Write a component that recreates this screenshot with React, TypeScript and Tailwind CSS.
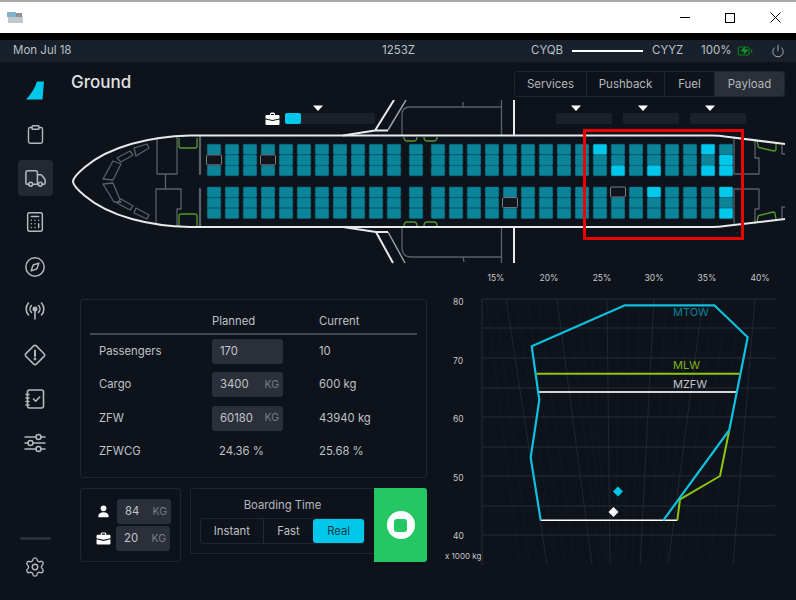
import React from 'react';
import { Battery, Calculator, Clipboard, Compass, Power, Settings, Truck, Zap } from 'lucide-react';

const SEAT_X = [207, 225, 243, 261, 279, 297, 315, 333, 351, 369, 387, 409, 431, 449, 467, 485, 503, 521, 539, 557, 575, 593, 611, 629, 647, 665, 683, 701, 719];
const SEAT_Y = [144, 154.7, 165.3, 186.8, 197.4, 208];

// keyed "x-rowIndex"
const BRIGHT = new Set(['593-0', '611-2', '647-2', '701-0', '701-2', '719-1', '719-2', '647-3', '719-3', '719-5']);
const EMPTY = new Set(['207-1', '261-1', '503-4', '611-3']);

const BriefcaseIcon = ({ className }: { className?: string }) => (
  <svg viewBox="0 0 16 14" className={className} fill="currentColor">
    <path d="M5 3V2a1.5 1.5 0 0 1 1.5-1.5h3A1.5 1.5 0 0 1 11 2v1h3.2A1.3 1.3 0 0 1 15.5 4.3V6.6L8 8.4.5 6.6V4.3A1.3 1.3 0 0 1 1.8 3ZM6.2 3h3.6V2a.3.3 0 0 0-.3-.3h-3a.3.3 0 0 0-.3.3Z" />
    <path d="M.5 7.8 8 9.6l7.5-1.8v4.4a1.3 1.3 0 0 1-1.3 1.3H1.8a1.3 1.3 0 0 1-1.3-1.3Z" />
  </svg>
);

const PersonIcon = ({ className }: { className?: string }) => (
  <svg viewBox="0 0 14 14" className={className} fill="currentColor">
    <circle cx="7" cy="3.6" r="3.1" />
    <path d="M1.5 13.2v-1.6C1.5 9.3 4 7.9 7 7.9s5.500 1.400 5.500 3.700v1.600Z" />
  </svg>
);

const SideButton = ({ children, active }: { children: React.ReactNode; active?: boolean }) => (
  <div className={`w-[35px] h-[36px] rounded-[4px] flex items-center justify-center text-[#b4b8be] ${active ? 'bg-[#232932]' : ''}`}>
    {children}
  </div>
);

const Sidebar = () => (
  <div className="w-[70px] shrink-0 flex flex-col items-center pl-0 pt-[19px] pb-[22px]">
    <svg viewBox="0 0 18 19" className="w-[18px] h-[19px] mb-[16px]">
      <path d="M11 0.500 18 0.500 16.500 18.500 0 18.500Q8 10 11 0.500Z" fill="#00c8ea" />
    </svg>
    <div className="flex flex-col items-center gap-[8.2px]">
      <SideButton><Clipboard size={21} strokeWidth={1.6} /></SideButton>
      <SideButton active><Truck size={23} strokeWidth={1.6} /></SideButton>
      <SideButton><Calculator size={22} strokeWidth={1.6} /></SideButton>
      <SideButton><Compass size={22} strokeWidth={1.6} /></SideButton>
      <SideButton>
        <svg viewBox="0 0 22 22" className="w-[22px] h-[22px]" fill="none" stroke="currentColor" strokeWidth="1.6" strokeLinecap="round">
          <circle cx="11" cy="9" r="1.700" fill="currentColor" />
          <path d="M11 10v9" />
          <path d="M7.500 12.500a5 5 0 0 1 0-7M14.500 5.500a5 5 0 0 1 0 7M4.500 15a9 9 0 0 1 0-12M17.500 3a9 9 0 0 1 0 12" />
        </svg>
      </SideButton>
      <SideButton>
        <svg viewBox="0 0 22 22" className="w-[22px] h-[22px]" fill="none" stroke="currentColor" strokeWidth="1.600" strokeLinecap="round" strokeLinejoin="round">
          <path d="M9.700 1.900a1.800 1.800 0 0 1 2.600 0l7.800 7.800a1.800 1.800 0 0 1 0 2.600l-7.800 7.800a1.800 1.800 0 0 1-2.600 0l-7.800-7.800a1.800 1.800 0 0 1 0-2.600Z" />
          <path d="M11 6.500v5.500" strokeWidth="2" />
          <circle cx="11" cy="15" r="0.600" fill="currentColor" />
        </svg>
      </SideButton>
      <SideButton>
        <svg viewBox="0 0 22 22" className="w-[22px] h-[22px]" fill="none" stroke="currentColor" strokeWidth="1.600" strokeLinecap="round" strokeLinejoin="round">
          <rect x="3.500" y="2" width="16" height="18" rx="2" />
          <path d="M2 6.500h3M2 10h3M2 13.500h3M2 17h3" />
          <path d="m9.500 11 2.200 2.200 4-4.200" />
        </svg>
      </SideButton>
      <SideButton>
        <svg viewBox="0 0 22 22" className="w-[22px] h-[22px]" fill="none" stroke="currentColor" strokeWidth="1.500" strokeLinecap="round">
          <path d="M1 5h11M17 5h4M1 11h3M9 11h12M1 17h11M17 17h4" />
          <circle cx="14.500" cy="5" r="2.500" />
          <circle cx="6.500" cy="11" r="2.500" />
          <circle cx="14.500" cy="17" r="2.500" />
        </svg>
      </SideButton>
    </div>
    <div className="mt-auto w-[31px] h-[3px] rounded-full bg-[#2a303a] mb-[16px]" />
    <div className="text-[#b4b8be]"><Settings size={22} strokeWidth={1.5} /></div>
  </div>
);

const Marker = ({ x }: { x: number }) => <path d={`M${x - 5} 105.500h10l-5 5.500Z`} fill="#fff" />;

const Aircraft = () => {
  const grey = '#5b6068';
  const green = '#4f9a2e';
  return (
    <svg viewBox="70 100 726 165" className="w-[726px] h-[165px] block" fill="none">
      {/* loading bars */}
      <rect x="285" y="113" width="90" height="11" rx="2" fill="#1b2029" />
      <rect x="285" y="113" width="16" height="11" rx="2" fill="#00c8ea" />
      <rect x="556" y="113" width="56" height="11" rx="2" fill="#1b2029" />
      <rect x="623" y="113" width="56" height="11" rx="2" fill="#1b2029" />
      <rect x="690" y="113" width="56" height="11" rx="2" fill="#1b2029" />
      <Marker x={318} />
      <Marker x={576} />
      <Marker x={643} />
      <Marker x={710} />
      <g transform="translate(265 112)" fill="#fff">
        <path d="M5 3V2a1.500 1.500 0 0 1 1.500-1.500h2A1.500 1.500 0 0 1 10 2v1h3.500a1 1 0 0 1 1 1v2.400L7.500 8 .5 6.400V4a1 1 0 0 1 1-1ZM6 3h3V2h-3Z" />
        <path d="M.5 7.500 7.500 9l7-1.500V12a1 1 0 0 1-1 1h-12a1 1 0 0 1-1-1Z" />
      </g>

      {/* seats */}
      {SEAT_X.map((x) =>
        SEAT_Y.map((y, row) => {
          const key = `${x}-${row}`;
          if (EMPTY.has(key)) return null;
          return <rect key={key} x={x + 0.25} y={y + 0.25} width={13.5} height={10.2} rx="1.200" fill={BRIGHT.has(key) ? '#00c8ea' : '#0b8398'} stroke={BRIGHT.has(key) ? '#00a8c4' : '#0a6e80'} strokeWidth="0.500" />;
        })
      )}
      {/* empty seats sit over their neighbours */}
      {SEAT_X.map((x) =>
        SEAT_Y.map((y, row) =>
          EMPTY.has(`${x}-${row}`) ? (
            <rect key={`${x}-${row}`} x={x - 0.5} y={y + 0.2} width={15} height={10} rx="1" fill="#10141c" stroke="#7a7e85" strokeWidth="1" />
          ) : null
        )
      )}

      {/* wings and structure */}
      <g stroke={grey} strokeWidth="1.300" strokeLinejoin="round">
        <path d="M402 135v-20q0-8 8-8h91.500M463 107v-5M501.500 100v35" />
        <path d="M402 227v20q0 10 9 10h90.500M463 257l1 5M501.500 227v36" />
        <path d="M157 137v37h20v-37M165.500 174v15M156 225v-36h25v20h-4v17" />
        <path d="M734 137v37h25v-16h-4v-19M734 226v-37h25v20h-4v15" />
        <path d="M785 154h-3v-9M785 207h-3v11" />
        <path d="M103 179 113 161l8 3-8 16ZM117 158l13-7 3 4-12 7ZM134 148l13-4 2 4-13 8Z" />
        <path d="M103 184l10-1 8 19-7 0ZM117 203l13 7 3-4-12-7ZM134 213l13 6 2-4-13-7Z" />
      </g>
      <path d="M388 130 406 100M388 232 405 263" stroke="#9a9da2" strokeWidth="1.500" />
      <path d="M200 137v37M200 189v37" stroke={grey} strokeWidth="2.200" strokeLinecap="round" />
      <g stroke={green} strokeWidth="1.300" strokeLinejoin="round">
        <path d="M179 138v8q0 2 2 2h14q2 0 2-2v-8M179 226v-10q0-2 2-2h14q2 0 2 2v10" />
        <path d="M404 137q0 4 3 4h7q3 0 3-4M424 137q0 4 3 4h7q3 0 3-4M404 226q0-4 3-4h7q3 0 3 4M424 226q0-4 3-4h7q3 0 3 4" />
        <path d="M757 140l1 6q0 2 3 2l13 3q2 0 2-2v-6M757 222l1-5q0-2 3-2l12-3q2 0 2 2l1 5" />
      </g>
      <g stroke="#e8e9ea" strokeWidth="2" strokeLinejoin="round">
        <path d="M785 144 725 136.500Q720 135.500 712 135.500H190C150 136.500 110 146 85 167Q73 177 73 181.500Q73 186 85 196C110 217 150 226 190 227H712Q720 227 725 226L785 219" />
        <path d="M343 135.500 375 130.500 394 100M375 130.500H388" />
        <path d="M343 227 376 232 393 263M376 232H388" />
        <path d="M514 100v35M514 227v36" />
      </g>
    </svg>
  );
};

const PCT = [
  { label: '15%', x: 496 },
  { label: '20%', x: 549 },
  { label: '25%', x: 602 },
  { label: '30%', x: 654 },
  { label: '35%', x: 707 },
  { label: '40%', x: 760 },
];
const GRID_Y = [299, 328, 358, 388, 417, 447, 476, 506, 535];
// slanted CG lines: top x, bottom x
const MAJOR = [[506, 547], [557, 592], [607, 610], [654, 640], [703, 668], [755, 733]];
const MINOR = [[486, 520], [495, 530], [516, 556], [527, 565], [538, 575], [568, 600], [578, 605], [588, 608], [618, 616], [628, 625], [640, 632], [666, 650], [678, 660], [690, 665], [714, 680], [726, 695], [740, 710]];

const Chart = () => (
  <svg viewBox="440 270 356 300" className="w-[356px] h-[300px] block" fill="none">
    {PCT.map((p) => (
      <text key={p.label} x={p.x} y={281} textAnchor="middle" fill="#c4c7cb" fontSize="8.500" fontFamily="Inter, sans-serif">{p.label}</text>
    ))}
    {[['80', 305], ['70', 364], ['60', 422], ['50', 481], ['40', 539]].map(([t, y]) => (
      <text key={t} x={453} y={y} fill="#c4c7cb" fontSize="8.500" fontFamily="Inter, sans-serif">{t}</text>
    ))}
    <text x={445} y={559} fill="#c4c7cb" fontSize="8" fontFamily="Inter, sans-serif">x 1000 kg</text>
    {MINOR.map(([a, b]) => <path key={a} d={`M${a} 299 ${b} 565`} stroke="#141920" />)}
    {MAJOR.map(([a, b]) => <path key={a} d={`M${a} 299 ${b} 565`} stroke="#22262f" />)}
    {GRID_Y.map((y) => <path key={y} d={`M482 ${y}H775`} stroke="#272b34" />)}
    <path d="M482 299V565" stroke="#272b34" />

    <path d="M536.300 373.700H739.700" stroke="#8ec60f" strokeWidth="2" />
    <path d="M539 392H736" stroke="#d5d6d8" strokeWidth="2" />
    <path d="M540.700 520.300H677.300" stroke="#fff" strokeWidth="1.500" />
    <path d="M729.300 430 720 476 680 499.300 677.300 520.300" stroke="#8ec60f" strokeWidth="2" strokeLinejoin="round" />
    <path d="M663.300 520.300 729.300 430 747.700 337.300 714.300 305.300H625L531.700 346.300 539.300 400 530.700 457.700 540.700 520.300" stroke="#0fc0de" strokeWidth="2.200" strokeLinejoin="round" />

    <text x={673} y={316} fill="#0b8398" fontSize="11" fontFamily="Inter, sans-serif">MTOW</text>
    <text x={673} y={369} fill="#7fb20e" fontSize="11" fontFamily="Inter, sans-serif">MLW</text>
    <text x={673} y={388} fill="#c3c5c9" fontSize="11" fontFamily="Inter, sans-serif">MZFW</text>
    <path d="M618 486.500 623 491.500 618 496.500 613 491.500Z" fill="#00c8ea" />
    <path d="M613.500 507 618.500 512 613.500 517 608.500 512Z" fill="#fff" />
  </svg>
);

const Field = ({ value, unit, width = 'w-[71px]' }: { value: string; unit?: string; width?: string }) => (
  <div className={`${width} h-[25px] rounded-[3px] bg-[#2a2f39] flex items-center justify-between pl-[8px] pr-[4px] text-[#c2c5ca]`}>
    <span>{value}</span>
    {unit && <span className="text-[#787d86] text-[10.500px]">{unit}</span>}
  </div>
);

const ROWS = [
  { label: 'Passengers', planned: <Field value="170" />, current: '10' },
  { label: 'Cargo', planned: <Field value="3400" unit="KG" />, current: '600 kg' },
  { label: 'ZFW', planned: <Field value="60180" unit="KG" />, current: '43940 kg' },
  { label: 'ZFWCG', planned: <span className="pl-[7px]">24.36 %</span>, current: '25.68 %' },
];

const WeightTable = () => (
  <div className="w-[347px] h-[179px] border border-[#1f2530] rounded-[3px] px-[9px] pt-[14px] text-[11.300px] text-[#bfc2c7]">
    <div className="flex h-[21px] border-b-2 border-[#43484f] pb-[5px] items-center">
      <div className="w-[122px]" />
      <div className="w-[107px]">Planned</div>
      <div>Current</div>
    </div>
    {ROWS.map((r) => (
      <div key={r.label} className="flex items-center h-[33.300px]">
        <div className="w-[122px] pl-[9px]">{r.label}</div>
        <div className="w-[107px]">{r.planned}</div>
        <div>{r.current}</div>
      </div>
    ))}
  </div>
);

const BOARD = [
  { label: 'Instant', w: 'w-[63px] border-r border-[#232932]' },
  { label: 'Fast', w: 'w-[50px]' },
  { label: 'Real', w: 'w-[51px] bg-[#00c8ea] text-[#0f3b48] rounded-[3px]' },
];

const BottomControls = () => (
  <div className="flex mt-[10px] text-[11.300px] text-[#bfc2c7]">
    <div className="w-[101px] h-[74px] border border-[#1f2530] rounded-[3px] flex flex-col justify-center gap-[2px] pl-[16px]">
      <div className="flex items-center gap-[7px]">
        <PersonIcon className="w-[13px] h-[13px] text-white" />
        <Field value="84" unit="KG" width="w-[54px]" />
      </div>
      <div className="flex items-center gap-[5px] -ml-[1px]">
        <BriefcaseIcon className="w-[15px] h-[13px] text-white" />
        <Field value="20" unit="KG" width="w-[54px]" />
      </div>
    </div>
    <div className="ml-[9px] w-[184px] h-[66px] border border-[#1f2530] border-r-0 rounded-l-[3px] px-[10px] pt-[8px]">
      <div className="text-center leading-[17px] text-[#b4b7bc]">Boarding Time</div>
      <div className="mt-[4px] flex h-[26px] border border-[#1f2530] rounded-[3px] items-stretch -mx-px">
        {BOARD.map((b) => (
          <div key={b.label} className={`${b.w} flex items-center justify-center`}>{b.label}</div>
        ))}
      </div>
    </div>
    <div className="w-[53px] h-[74px] bg-[#24c764] rounded-r-[3px] flex items-center justify-center">
      <div className="w-[28px] h-[28px] rounded-full bg-white flex items-center justify-center">
        <div className="w-[13px] h-[13px] rounded-[3px] bg-[#24c764]" />
      </div>
    </div>
  </div>
);

const TABS = [
  { label: 'Services', w: 'w-[72px]' },
  { label: 'Pushback', w: 'w-[78px]' },
  { label: 'Fuel', w: 'w-[50px]' },
  { label: 'Payload', w: 'w-[69px] bg-[#2a2f39]' },
];

export default function App() {
  return (
    <div className="relative w-[796px] h-[600px] overflow-hidden flex flex-col bg-[#0e131b] font-['Inter',sans-serif]">
      {/* window chrome */}
      <div className="h-[33px] shrink-0 bg-white border-t-2 border-[#a8a8a8] flex items-center pl-[7px] pr-[15px]">
        <svg viewBox="0 0 16 11" className="w-[16px] h-[11px]">
          <rect x="1" y="4" width="15" height="7" rx="1" fill="#c3c7cc" />
          <rect x="0" y="0" width="9" height="5" fill="#7fb4cc" />
          <rect x="9" y="1" width="6" height="4" fill="#8c9298" />
        </svg>
        <div className="ml-auto flex items-center gap-[35px] text-black">
          <div className="w-[10px] h-px bg-black" />
          <div className="w-[10px] h-[10px] border border-black" />
          <svg viewBox="0 0 11 11" className="w-[11px] h-[11px]" stroke="currentColor"><path d="M.5.5l10 10M10.500.5l-10 10" /></svg>
        </div>
      </div>
      <div className="h-[7px] shrink-0 bg-black" />

      {/* status bar */}
      <div className="h-[22px] shrink-0 bg-[#17202b] flex items-center pl-[13px] text-[11.500px] text-[#bcc0c5]">
        <span className="w-[369px]">Mon Jul 18</span>
        <span className="w-[149px]">1253Z</span>
        <span className="w-[41px]">CYQB</span>
        <div className="w-[71px] h-[2px] bg-white" />
        <span className="ml-[9px] w-[49px]">CYYZ</span>
        <span className="w-[36px]">100%</span>
        <span className="relative w-[15px] h-[12px] text-[#0f7a1b]">
          <Battery size={16} strokeWidth={1.800} className="absolute -top-[2px] left-0" />
          <Zap size={9} fill="currentColor" strokeWidth={1} className="absolute top-[1px] left-[3px] text-[#12a028]" />
        </span>
        <Power size={14} strokeWidth={1.700} className="ml-[19px] text-[#a9adb3]" />
      </div>

      <div className="flex-1 flex min-h-0">
        <Sidebar />
        <div className="flex-1 min-w-0 flex flex-col">
          <div className="h-[38px] shrink-0 pt-[9px] pl-px flex justify-between items-start pr-[11px]">
            <div className="text-[17px] font-medium text-[#e0e1e3] leading-[22px]">Ground</div>
            <div className="flex h-[26px] border border-[#1f2530] rounded-[3px] text-[11.500px] text-[#b4b7bc] overflow-hidden">
              {TABS.map((t) => (
                <div key={t.label} className={`${t.w} pt-px flex items-center justify-center border-r border-[#1f2530] last:border-r-0`}>{t.label}</div>
              ))}
            </div>
          </div>
          <Aircraft />
          <div className="flex mt-[5px]">
            <div className="ml-[10px] pt-[29px] w-[360px] shrink-0">
              <WeightTable />
              <BottomControls />
            </div>
            <Chart />
          </div>
        </div>
      </div>

      {/* annotation */}
      <div className="absolute left-[583px] top-[129px] w-[161px] h-[111px] border-[3px] border-[#ee0000]" />
    </div>
  );
}
